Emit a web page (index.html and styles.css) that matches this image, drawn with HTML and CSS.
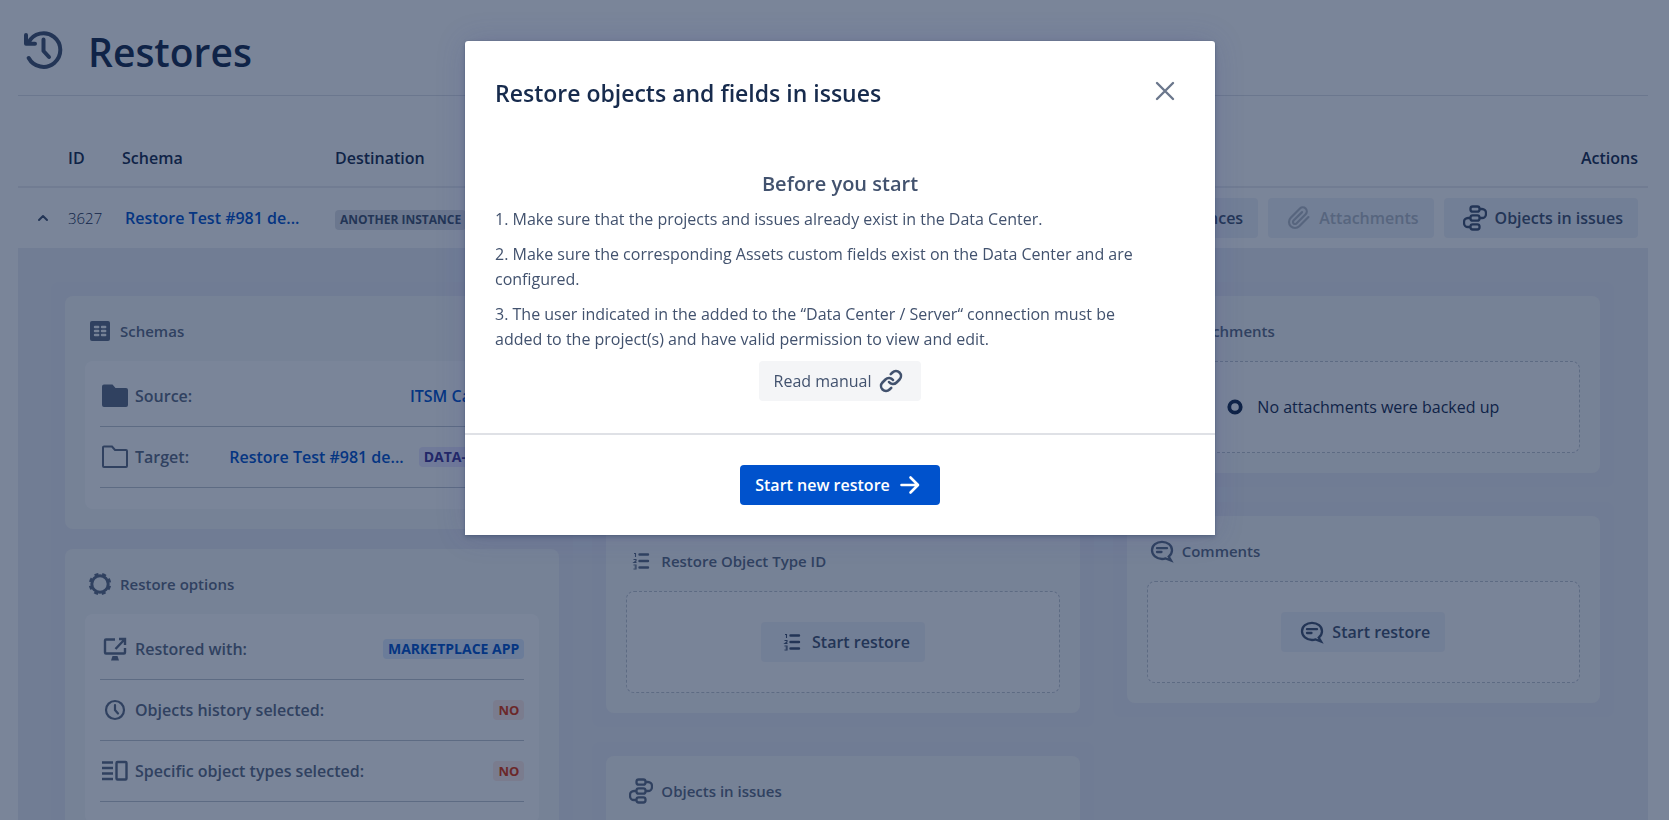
FILE: index.html
```html
<!DOCTYPE html>
<html lang="en">
<head>
<meta charset="utf-8">
<meta name="viewport" content="width=device-width, initial-scale=1">
<title>Restores</title>
<link rel="stylesheet" href="styles.css">
</head>
<body>
<svg class="sprite" aria-hidden="true">
  <symbol id="i-flow" viewBox="0 0 24 26"><g fill="none" stroke="currentColor" stroke-width="2.300"><rect x="7.500" y="1.500" width="9" height="5.200" rx="2.200"/><rect x="7.500" y="10.400" width="9" height="5.200" rx="2.200"/><rect x="7.500" y="19.300" width="9" height="5.200" rx="2.200"/><path d="M16.500 4h2.500a4 4 0 0 1 4 4v1a4 4 0 0 1-4 4h-2.500M7 13H5a4 4 0 0 0-4 4v1a4 4 0 0 0 4 4h2"/></g></symbol>
  <symbol id="i-chat" viewBox="0 0 24 24"><path d="M12 2.800c5.500 0 10 3.700 10 8.400 0 2.600-1.300 4.800-3.300 6.400l2.300 3.900-5.400-2.100c-1.100.4-2.400.6-3.600.6C6.500 20 2 16.100 2 11.200S6.500 2.800 12 2.800z" fill="none" stroke="currentColor" stroke-width="2.300"/><path d="M7 9.200h10M7 13h4.500" stroke="currentColor" stroke-width="2.300" stroke-linecap="round"/></symbol>
  <symbol id="i-list" viewBox="0 0 24 24"><path d="M10.500 5.500h8.500M10.500 12h8.500M10.500 18.500h8.500" stroke="currentColor" stroke-width="2.400" stroke-linecap="round"/><path d="M5 4.500h1.500V8M4.500 10.500h2.500v1.500L5 13.500h2.500M4.500 16h2.500v4H4.500M5.500 18H7" fill="none" stroke="currentColor" stroke-width="1.100"/></symbol>
  <symbol id="i-clip" viewBox="0 0 24 24"><path d="M21.440 11.050l-9.190 9.190a6 6 0 0 1-8.490-8.490l9.190-9.190a4 4 0 0 1 5.660 5.660l-9.200 9.190a2 2 0 0 1-2.830-2.830l8.490-8.480" fill="none" stroke="currentColor" stroke-width="2.200" stroke-linecap="round" stroke-linejoin="round"/></symbol>
</svg>

<main class="page">
  <header class="page-header">
    <svg class="history" viewBox="0 0 40 40" aria-hidden="true"><g fill="none" stroke="currentColor" stroke-width="4" stroke-linecap="round" stroke-linejoin="round"><path d="M4.500 12.500A16.800 16.800 0 1 1 4.700 28"/><path d="M2 5v8.700h9"/><path d="M19.500 9.500v11.500l5.500 6"/></g></svg>
    <h1>Restores</h1>
  </header>

  <table class="restores">
    <colgroup><col class="c-toggle"><col class="c-id"><col class="c-schema"><col class="c-dest"><col></colgroup>
    <thead>
      <tr><th></th><th scope="col">ID</th><th scope="col">Schema</th><th scope="col">Destination</th><th scope="col" class="actions-head">Actions</th></tr>
    </thead>
    <tbody>
      <tr class="restore">
        <td><button class="toggle" type="button" aria-label="Collapse"><svg viewBox="0 0 12 12"><path d="M2 8l4-4 4 4" fill="none" stroke="currentColor" stroke-width="2" stroke-linecap="round" stroke-linejoin="round"/></svg></button></td>
        <td class="num">3627</td>
        <td><a class="schema-link" href="#">Restore Test #981 de...</a></td>
        <td><span class="tag tag-grey">ANOTHER INSTANCE</span></td>
        <td>
          <div class="actions">
            <button class="btn" type="button"><svg class="ico"><use href="#i-list"/></svg>References</button>
            <button class="btn" type="button" disabled><svg class="ico"><use href="#i-clip"/></svg>Attachments</button>
            <button class="btn" type="button"><svg class="ico ico-flow"><use href="#i-flow"/></svg>Objects in issues</button>
          </div>
        </td>
      </tr>
      <tr>
        <td colspan="5" class="details">
          <div class="columns">
            <div class="column">
              <div class="group">
                <section class="card">
                  <h2><svg class="ico" viewBox="0 0 24 24"><rect x="2" y="2" width="20" height="20" rx="2" fill="currentColor"/><path d="M7 8h3.200M14 8h3.200M7 12h3.200M14 12h3.200M7 16h3.200M14 16h3.200" class="cut" stroke-width="2.400" stroke-linecap="round"/></svg>Schemas</h2>
                  <ul class="facts">
                    <li><svg class="ico-lg" viewBox="0 0 26 24"><path d="M2 0.500h8.500l3 3.500H24a2 2 0 0 1 2 2v15a2 2 0 0 1-2 2H2a2 2 0 0 1-2-2V2.500a2 2 0 0 1 2-2z" fill="currentColor"/></svg><span class="label">Source:</span><a href="#">ITSM Catalog B</a></li>
                    <li><svg class="ico-lg" viewBox="0 0 26 24"><path d="M2 1.500h8l3 3.500h11a1 1 0 0 1 1 1v15a1 1 0 0 1-1 1H2a1 1 0 0 1-1-1V2.500a1 1 0 0 1 1-1z" fill="none" stroke="currentColor" stroke-width="2"/></svg><span class="label">Target:</span><a href="#">Restore Test #981 de...</a><span class="tag tag-purple">DATA-CENTER</span></li>
                  </ul>
                </section>
                <section class="card">
                  <h2><svg class="ico" viewBox="0 0 24 24"><circle cx="12" cy="12" r="8.200" fill="none" stroke="currentColor" stroke-width="3"/><circle cx="12" cy="12" r="9.800" fill="none" stroke="currentColor" stroke-width="2.800" stroke-dasharray="3.900 3.797" stroke-dashoffset="-1.900"/></svg>Restore options</h2>
                  <ul class="facts">
                    <li><svg class="ico" viewBox="0 0 24 24"><g fill="none" stroke="currentColor" stroke-width="2.400"><path d="M12 2.500H3a1 1 0 0 0-1 1v12a1 1 0 0 0 1 1h18a1 1 0 0 0 1-1V11"/><path d="M12.500 12L21.500 2.500M16 2h6v6"/></g><path d="M9.500 19h5l1.500 4.500H8z" fill="currentColor"/></svg><span class="label">Restored with:</span><span class="tag tag-blue">MARKETPLACE APP</span></li>
                    <li><svg class="ico" viewBox="0 0 24 24"><g fill="none" stroke="currentColor" stroke-width="2.200"><circle cx="12" cy="12" r="9"/><path d="M12 7V12l3 3.500" stroke-linecap="round"/></g></svg><span class="label">Objects history selected:</span><span class="tag tag-red">NO</span></li>
                    <li><svg class="ico-lg" viewBox="0 0 26 24"><g fill="none" stroke="currentColor" stroke-width="2.400"><path d="M0 3.500h11M0 9h11M0 14.500h11M0 20h11"/><rect x="14.500" y="3" width="10" height="17.500" rx="1"/></g></svg><span class="label">Specific object types selected:</span><span class="tag tag-red">NO</span></li>
                  </ul>
                </section>
              </div>
            </div>
            <div class="column">
              <div class="group">
                <section class="card">
                  <h2><svg class="ico"><use href="#i-list"/></svg>References</h2>
                  <div class="drop"><button class="btn" type="button"><svg class="ico"><use href="#i-list"/></svg>Start restore</button></div>
                </section>
              </div>
              <div class="group">
                <section class="card">
                  <h2><svg class="ico"><use href="#i-list"/></svg>Restore Object Type ID</h2>
                  <div class="drop"><button class="btn" type="button"><svg class="ico"><use href="#i-list"/></svg>Start restore</button></div>
                </section>
              </div>
              <div class="group">
                <section class="card">
                  <h2><svg class="ico ico-flow"><use href="#i-flow"/></svg>Objects in issues</h2>
                  <div class="drop"></div>
                </section>
              </div>
            </div>
            <div class="column">
              <div class="group">
                <section class="card">
                  <h2><svg class="ico"><use href="#i-clip"/></svg>Attachments</h2>
                  <div class="drop"><p class="empty"><svg class="ring" viewBox="0 0 16 16"><circle cx="8" cy="8" r="5.700" fill="none" stroke="currentColor" stroke-width="3.800"/></svg>No attachments were backed up</p></div>
                </section>
              </div>
              <div class="group">
                <section class="card">
                  <h2><svg class="ico"><use href="#i-chat"/></svg>Comments</h2>
                  <div class="drop"><button class="btn" type="button"><svg class="ico"><use href="#i-chat"/></svg>Start restore</button></div>
                </section>
              </div>
            </div>
          </div>
        </td>
      </tr>
    </tbody>
  </table>
</main>

<div class="blanket">
  <div class="modal" role="dialog" aria-modal="true" aria-labelledby="modal-title">
    <header class="modal-header">
      <h2 id="modal-title">Restore objects and fields in issues</h2>
      <button class="close" type="button" aria-label="Close"><svg viewBox="0 0 20 20"><path d="M2 2l16 16M18 2L2 18" stroke="currentColor" stroke-width="2.400" stroke-linecap="round"/></svg></button>
    </header>
    <div class="modal-body">
      <h3>Before you start</h3>
      <p>1. Make sure that the projects and issues already exist in the Data Center.</p>
      <p>2. Make sure the corresponding Assets custom fields exist on the Data Center and are configured.</p>
      <p>3. The user indicated in the added to the “Data Center / Server“ connection must be added to the project(s) and have valid permission to view and edit.</p>
      <a class="manual" href="#">Read manual<svg class="ico" viewBox="0 0 24 24"><g fill="none" stroke="currentColor" stroke-width="2.600" stroke-linecap="round" stroke-linejoin="round"><path d="M10 13a5 5 0 0 0 7.540.54l3-3a5 5 0 0 0-7.070-7.070l-1.720 1.710"/><path d="M14 11a5 5 0 0 0-7.540-.54l-3 3a5 5 0 0 0 7.070 7.070l1.710-1.710"/></g></svg></a>
    </div>
    <footer class="modal-footer">
      <button class="primary" type="button">Start new restore<svg class="ico" viewBox="0 0 24 24"><path d="M3.500 12h16M12.500 4.500L20 12l-7.500 7.500" fill="none" stroke="currentColor" stroke-width="2.600" stroke-linecap="round" stroke-linejoin="round"/></svg></button>
    </footer>
  </div>
</div>
</body>
</html>
```
FILE: styles.css
```css
* { box-sizing: border-box; }

body {
  margin: 0;
  height: 100vh;
  overflow: hidden;
  background: #fff;
  color: #172b4d;
  font: 400 16px/24px "Open Sans", "Noto Sans", sans-serif;
}

h1, h2, h3, p, ul { margin: 0; padding: 0; font-weight: 600; }
p { font-weight: 400; }
ul { list-style: none; }
a { color: #0052cc; text-decoration: none; }
button { font: inherit; color: inherit; border: 0; cursor: pointer; }
svg { flex: none; }
.sprite { position: absolute; width: 0; height: 0; }
.ico { width: 24px; height: 24px; margin: 0 3px; }
.ico-flow { height: 26px; }
.ico-lg { width: 26px; height: 24px; margin: 0 2px; }

.page { padding: 0 21px 0 18px; }

.page-header {
  display: flex;
  align-items: center;
  gap: 24px;
  height: 96px;
  padding: 5px 6px 0;
  border-bottom: 1px solid #dfe1e6;
}
.page-header h1 { padding-top: 4px; font-size: 39px; line-height: 48px; }
.history { width: 40px; height: 40px; color: #42526e; }

/* Restores list */
.restores { width: 100%; border-collapse: collapse; table-layout: fixed; }
.restores th, .restores td { padding: 0; text-align: left; }
.restores th { height: 91px; padding-bottom: 16px; vertical-align: bottom; font-weight: 600; border-bottom: 2px solid #ebecf0; }
.restores .actions-head { text-align: right; padding-right: 10px; }
.c-toggle { width: 50px; }
.c-id { width: 54px; }
.c-schema { width: 213px; }
.c-dest { width: 220px; }
.restore { height: 61px; }
.toggle { display: flex; margin-left: 13px; padding: 6px; background: none; color: #42526e; }
.toggle svg { width: 12px; height: 12px; }
.num { font-size: 15px; font-weight: 300; }
.schema-link { padding-left: 3px; font-weight: 600; }
.actions { display: flex; justify-content: flex-end; gap: 10px; padding-right: 10px; }

.btn {
  display: inline-flex;
  align-items: center;
  gap: 5px;
  height: 40px;
  padding: 0 15px 0 16px;
  border-radius: 4px;
  background: #eef1f8;
  color: #42526e;
  font-weight: 600;
  white-space: nowrap;
}
.btn:disabled { color: #b3bac5; }

.tag {
  padding: 0 5px;
  border-radius: 4px;
  font-size: 13px;
  line-height: 20px;
  font-weight: 700;
  white-space: nowrap;
}
.tag-grey { display: inline-block; background: #dfe1e6; color: #42526e; font-size: 12px; }
.tag-purple { background: #eae6ff; color: #403294; font-size: 14px; }
.tag-blue { background: #deebff; color: #0052cc; font-size: 14px; }
.tag-red { background: #ffebe6; color: #de350b; }

/* Expanded details */
.restores .details { padding: 34px 34px 40px 33px; background: #ebeef5; }
.columns { display: grid; grid-template-columns: 522fr 501fr 501fr; gap: 19px; align-items: start; }
.column { display: flex; flex-direction: column; gap: 15px; }
.group { display: flex; flex-direction: column; gap: 20px; padding: 14px; border-radius: 8px; background: #eaebf3; }
.card { padding: 20px; border-radius: 8px; background: #f7f8f9; }
.card h2 {
  display: flex;
  align-items: center;
  gap: 5px;
  height: 30px;
  margin-bottom: 15px;
  color: #5e6c84;
  font-size: 15px;
}
.cut { stroke: #f7f8f9; }

.facts { padding: 5px 15px 21px; border-radius: 8px; background: #fff; color: #5e6c84; }
.facts li { display: flex; align-items: center; height: 61px; border-bottom: 1px solid #c1c7d0; font-weight: 600; }
.facts .label { margin: 0 auto 0 5px; }
.facts a + .tag { margin-left: 15px; }

.drop {
  display: flex;
  justify-content: center;
  padding: 30px;
  border: 1px dashed #c1c7d0;
  border-radius: 8px;
  background: #fcfcfd;
}
.empty { display: flex; align-items: center; gap: 14px; height: 30px; }
.ring { width: 16px; height: 16px; }

/* Dialog */
.blanket { position: fixed; inset: 0; padding: 41px 0 0 11px; background: rgba(9, 30, 66, 0.54); }
.modal {
  width: 100%;
  max-width: 750px;
  margin: 0 auto;
  border-radius: 3px 3px 0 0;
  background: #fff;
  box-shadow: 0 0 1px rgba(9, 30, 66, 0.31), 0 2px 4px rgba(9, 30, 66, 0.25), 0 0 30px rgba(60, 60, 140, 0.2);
}
.modal-header { display: flex; justify-content: space-between; align-items: flex-start; padding: 36px 36px 0 30px; }
.modal-header h2 { font-size: 23px; line-height: 32px; }
.close { display: flex; padding: 4px; background: none; color: #6b778c; }
.close svg { width: 20px; height: 20px; }
.modal-body {
  display: flex;
  flex-direction: column;
  gap: 10px;
  padding: 62px 30px 32px;
  border-bottom: 2px solid #dfe1e6;
  color: #42526e;
}
.modal-body h3 { font-size: 20px; line-height: 26px; text-align: center; }
.modal-body p { padding-right: 20px; line-height: 25px; }
.manual {
  display: flex;
  align-items: center;
  align-self: center;
  gap: 5px;
  height: 40px;
  margin-top: -1px;
  padding: 0 15px;
  border-radius: 4px;
  background: #f4f5f7;
  color: #42526e;
}
.modal-footer { display: flex; justify-content: center; padding: 30px; }
.primary {
  display: flex;
  align-items: center;
  gap: 5px;
  height: 40px;
  padding: 0 15px;
  border-radius: 4px;
  background: #0052cc;
  color: #fff;
  font-weight: 600;
}
```
